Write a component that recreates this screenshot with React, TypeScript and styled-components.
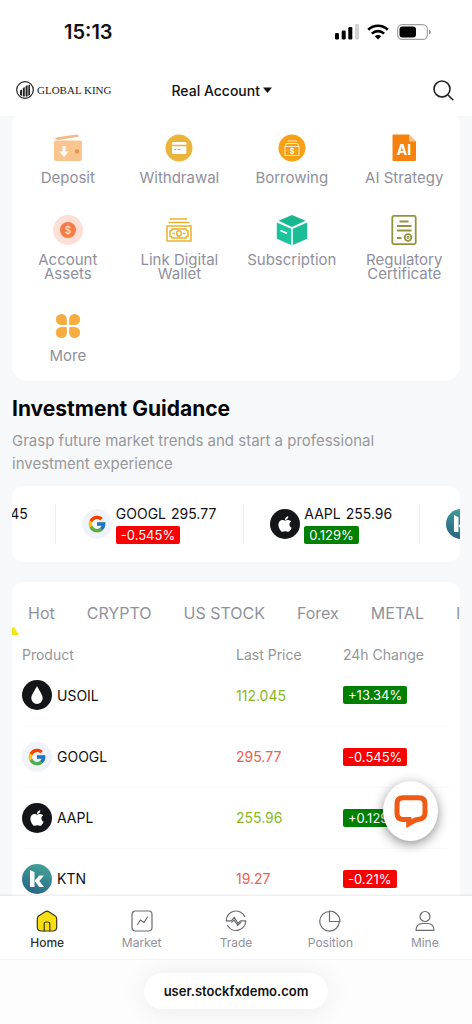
import React from "react";
import styled, { createGlobalStyle } from "styled-components";
import { FaApple } from "react-icons/fa";
import { FcGoogle } from "react-icons/fc";

const GlobalStyle = createGlobalStyle`
  * { box-sizing: border-box; }
  body {
    margin: 0;
    background: #ffffff;
    font-family: Inter, "Liberation Sans", sans-serif;
    color: #111111;
  }
  button {
    font: inherit;
    color: inherit;
    background: none;
    border: 0;
    padding: 0;
    cursor: pointer;
  }
  a { color: inherit; text-decoration: none; }
  svg { display: block; flex: none; }
`;

const Screen = styled.div`
  display: flex;
  flex-direction: column;
  height: 100vh;
  position: relative;
  overflow: hidden;
`;

const StatusBar = styled.div`
  flex: none;
  display: flex;
  align-items: center;
  justify-content: space-between;
  height: 64px;
  padding: 0 41px 0 64px;
`;

const Clock = styled.span`
  font-size: 20px;
  font-weight: 600;
`;

const StatusIcons = styled.div`
  display: flex;
  align-items: center;
  gap: 8px;
`;

const TopBar = styled.header`
  flex: none;
  display: flex;
  align-items: center;
  height: 52px;
  padding: 0 18px 0 16px;
`;

const Brand = styled.a`
  display: flex;
  align-items: center;
  gap: 3px;
  font-family: "Liberation Serif", serif;
  font-size: 11px;
  color: #222222;
  white-space: nowrap;
`;

const AccountButton = styled.button`
  display: flex;
  align-items: center;
  gap: 3px;
  margin-left: 60px;
  font-size: 14px;
  font-weight: 500;
  white-space: nowrap;
`;

const SearchButton = styled.button`
  margin-left: auto;
`;

const Content = styled.main`
  flex: 1;
  min-height: 0;
  overflow: hidden;
  background: #f7f8fa;
  padding: 0 12px;
`;

const Card = styled.section`
  background: #ffffff;
  border-radius: 12px;
  overflow: hidden;
`;

const ActionsCard = styled(Card)`
  display: grid;
  grid-template-columns: repeat(4, 1fr);
  row-gap: 30px;
  padding: 17px 0 18px;
  border-radius: 6px 6px 16px 16px;
`;

const Action = styled.a`
  display: flex;
  flex-direction: column;
  align-items: center;
  gap: 8px;
  padding: 0 12px;
  font-size: 15px;
  line-height: 14px;
  text-align: center;
  color: #8f909c;
`;

const Title = styled.h1`
  margin: 16px 0 8px;
  font-size: 21px;
  line-height: 24px;
  font-weight: 700;
  color: #050505;
`;

const Lead = styled.p`
  margin: 0 0 11px;
  padding-right: 40px;
  font-size: 15px;
  line-height: 23px;
  color: #97989b;
`;

const TickerCard = styled(Card)`
  display: flex;
  align-items: center;
  height: 76px;
  margin-bottom: 20px;
`;

const TickerTrack = styled.div`
  display: flex;
  margin-left: -141px;
`;

const TickerItem = styled.div`
  flex: none;
  display: flex;
  align-items: center;
  gap: 4px;
  height: 40px;
  padding: 0 27px 0 26px;
  border-right: 1px solid #eeeeee;
`;

const Quote = styled.div`
  display: flex;
  flex-direction: column;
  align-items: flex-start;
  gap: 3px;
`;

const QuoteLine = styled.div`
  display: flex;
  gap: 5px;
  font-size: 14px;
  line-height: 18px;
`;

const Badge = styled.span<{ $up: boolean }>`
  display: inline-block;
  padding: 0 5px;
  border-radius: 2px;
  background: ${(p) => (p.$up ? "#008000" : "#fa0000")};
  color: #ffffff;
  font-size: 13px;
  line-height: 18px;
`;

const Tabs = styled.div`
  position: relative;
  display: flex;
  align-items: center;
  gap: 32px;
  height: 62px;
  padding-left: 16px;
`;

const Tab = styled.button`
  flex: none;
  font-size: 16px;
  color: #8f929c;
`;

const TabMarker = styled.svg`
  position: absolute;
  left: 0;
  bottom: 9px;
`;

const TableWrap = styled.div`
  padding: 0 10px;
`;

const Table = styled.table`
  width: 100%;
  table-layout: fixed;
  border-collapse: collapse;
  font-size: 14px;

  th {
    width: 25%;
    height: 21px;
    padding: 0;
    text-align: left;
    font-weight: 400;
    color: #939599;
  }
  th:first-child { width: 50%; }
  td {
    height: 61px;
    padding: 0;
    border-bottom: 1px solid #fafafa;
  }
`;

const Product = styled.div`
  display: flex;
  align-items: center;
  gap: 5px;
`;

const Price = styled.span<{ $up: boolean }>`
  color: ${(p) => (p.$up ? "#86b81f" : "#ea5f50")};
`;

const Coin = styled.span<{ $bg: string }>`
  flex: none;
  display: flex;
  align-items: center;
  justify-content: center;
  width: 30px;
  height: 30px;
  border-radius: 50%;
  background: ${(p) => p.$bg};
  color: #ffffff;
`;

const ChatButton = styled.button`
  position: absolute;
  right: 34px;
  bottom: 183px;
  display: flex;
  align-items: center;
  justify-content: center;
  width: 55px;
  height: 60px;
  border-radius: 50%;
  background: #ffffff;
  box-shadow: 0 3px 12px rgba(0, 0, 0, 0.45);
`;

const NavBar = styled.nav`
  flex: none;
  display: grid;
  grid-template-columns: repeat(5, 1fr);
  height: 64px;
  background: #ffffff;
  border-bottom: 1px solid #f3f3f4;
  box-shadow: 0 -1px 2px rgba(0, 0, 0, 0.09);
`;

const NavItem = styled.a<{ $active?: boolean }>`
  display: flex;
  flex-direction: column;
  align-items: center;
  gap: 3px;
  padding-top: 14px;
  font-size: 12px;
  line-height: 16px;
  font-weight: ${(p) => (p.$active ? 500 : 400)};
  color: ${(p) => (p.$active ? "#333333" : "#8f929e")};
`;

const AddressBar = styled.footer`
  flex: none;
  display: flex;
  align-items: center;
  justify-content: center;
  height: 64px;
  padding-bottom: 2px;
  background: #fdfdfd;
`;

const Address = styled.button`
  height: 36px;
  padding: 0 20px;
  border-radius: 18px;
  background: #ffffff;
  box-shadow: 0 2px 28px rgba(0, 0, 0, 0.08);
  font-size: 13px;
  font-weight: 600;
`;

const icons: Record<string, React.ReactNode> = {
  deposit: (
    <svg width="30" height="30" viewBox="0 0 30 30">
      <path d="M1.500 6 4 4.200 24 1.500q1.200 0 1.400 1.200l.2 1L5 7z" fill="#f3b983" />
      <rect x="1" y="7.500" width="28" height="20.500" rx="2" fill="#fac48f" />
      <path d="M9.500 13h3v5.500h3.200L11 24l-4.700-5.500h3.200z" fill="#fff" />
      <circle cx="24" cy="18.500" r="2.200" fill="#e8944a" />
    </svg>
  ),
  withdrawal: (
    <svg width="30" height="30" viewBox="0 0 30 30">
      <circle cx="15" cy="15" r="13.500" fill="#edb43a" />
      <path d="M8 10.200q0-1.200 1.200-1.200h12q1.200 0 1.200 1.200v1.600H8z" fill="#fff" />
      <path d="M8 13.200h14.400v6.600q0 1.200-1.200 1.200h-12q-1.200 0-1.200-1.200z" fill="#fff" />
      <path d="M10 16.500h2M13.500 16.500h3" stroke="#edb43a" />
    </svg>
  ),
  borrowing: (
    <svg width="30" height="30" viewBox="0 0 30 30" fill="none" stroke="#ffe9c2">
      <circle cx="15" cy="15" r="13.500" fill="#f8a116" stroke="none" />
      <path d="M10.500 8h9.500M9.500 10.500h11l1.500 3M9.500 10.500 8 13.500" />
      <rect x="8" y="13.500" width="14" height="9" />
      <text x="15" y="20.500" fontSize="7" fontWeight="600" textAnchor="middle" fill="#fff" stroke="none">$</text>
    </svg>
  ),
  strategy: (
    <svg width="30" height="30" viewBox="0 0 30 30">
      <path d="M4.500 1.500H20l7 7v18.500q0 1-1 1H4.500q-1 0-1-1v-24.500q0-1 1-1z" fill="#f5810f" />
      <path d="M20 1.500l7 7h-5.500q-1.500 0-1.500-1.500z" fill="#fbc18a" />
      <text x="15" y="22" fontSize="14" fontWeight="700" textAnchor="middle" fill="#fff">AI</text>
    </svg>
  ),
  assets: (
    <svg width="30" height="30" viewBox="0 0 30 30">
      <circle cx="15" cy="15" r="15" fill="#fddfd6" />
      <circle cx="15" cy="15" r="8" fill="#f57b48" />
      <text x="15" y="18.500" fontSize="10" fontWeight="500" textAnchor="middle" fill="#ffe4d8">$</text>
    </svg>
  ),
  link: (
    <svg width="30" height="30" viewBox="0 0 30 30" fill="none" stroke="#e8b32c" strokeWidth="1.500">
      <path d="M6 4h17M4.500 7.500h21" />
      <rect x="3" y="11" width="24" height="15" />
      <path d="M8 14h14q0 2 2 2v5q-2 0-2 2H8q0-2-2-2v-5q2 0 2-2z" />
      <ellipse cx="15" cy="18.500" rx="2.200" ry="2.800" />
      <path d="M8.500 18.500h2.500M19 18.500h2.500" />
    </svg>
  ),
  subscription: (
    <svg width="32" height="30" viewBox="0 0 32 30">
      <path d="M16 0 29.500 5.800 16 12 2.500 5.800z" fill="#17b890" />
      <path d="M.8 7.500 15.200 13.700V30L.8 23.800z" fill="#1bc49d" />
      <path d="M31.200 7.500 16.800 13.700V30L31.200 23.800z" fill="#1bbd97" />
      <path d="M4.500 15.500l6.500 2.800" stroke="#fff" strokeWidth="1.800" />
    </svg>
  ),
  certificate: (
    <svg width="30" height="30" viewBox="0 0 30 30" fill="none" stroke="#94943f" strokeWidth="1.800">
      <rect x="3.300" y="0.900" width="23.400" height="28.200" rx="1.500" />
      <path d="M10.500 6.500h9M8 11h14.500M8 15.500h14.500M8 23h4.500" />
      <circle cx="19" cy="22.500" r="3.300" />
      <circle cx="19" cy="22.500" r=".5" />
    </svg>
  ),
  more: (
    <svg width="30" height="30" viewBox="0 0 30 30" fill="#f6ac40">
      <path d="M8.400 3A5.500 5.500 0 0 0 8.400 14H12.700q1.200 0 1.200-1.200V8.500A5.500 5.500 0 0 0 8.400 3z" />
      <path d="M21.600 3A5.500 5.500 0 0 1 21.600 14H17.300q-1.200 0-1.200-1.200V8.500A5.500 5.500 0 0 1 21.600 3z" />
      <path d="M8.400 27A5.500 5.500 0 0 1 8.400 16H12.700q1.200 0 1.200 1.200V21.500A5.500 5.500 0 0 1 8.400 27z" />
      <path d="M21.600 27A5.500 5.500 0 0 0 21.600 16H17.300q-1.200 0-1.200 1.200V21.500A5.500 5.500 0 0 0 21.600 27z" />
    </svg>
  ),
};

const actions = [
  { icon: "deposit", label: "Deposit" },
  { icon: "withdrawal", label: "Withdrawal" },
  { icon: "borrowing", label: "Borrowing" },
  { icon: "strategy", label: "AI Strategy" },
  { icon: "assets", label: "Account Assets" },
  { icon: "link", label: "Link Digital Wallet" },
  { icon: "subscription", label: "Subscription" },
  { icon: "certificate", label: "Regulatory Certificate" },
  { icon: "more", label: "More" },
];

const quotes = [
  { symbol: "USOIL", price: "112.045", change: "13.34%", up: true },
  { symbol: "GOOGL", price: "295.77", change: "-0.545%", up: false },
  { symbol: "AAPL", price: "255.96", change: "0.129%", up: true },
  { symbol: "KTN", price: "19.27", change: "-0.21%", up: false },
];

const tabs = ["Hot", "CRYPTO", "US STOCK", "Forex", "METAL", "Index"];

function SymbolIcon({ symbol }: { symbol: string }) {
  if (symbol === "GOOGL") {
    return <Coin $bg="#f0f3fa"><FcGoogle size={20} /></Coin>;
  }
  if (symbol === "AAPL") {
    return <Coin $bg="#131519"><FaApple size={18} /></Coin>;
  }
  if (symbol === "USOIL") {
    return (
      <Coin $bg="#131519">
        <svg width="12" height="18" viewBox="0 0 12 18">
          <path d="M6 0C7.500 3.500 11.700 8.500 11.700 12.200A5.700 5.700 0 0 1 .3 12.200C.3 8.500 4.500 3.500 6 0z" fill="#fff" />
        </svg>
      </Coin>
    );
  }
  return (
    <Coin $bg="linear-gradient(200deg, #48a999, #235f87)">
      <svg width="16" height="18" viewBox="0 0 16 18" fill="#fff">
        <path d="M1 0 5.500 2.200V17H1z" />
        <path d="M5.500 10.800 10.300 5.500H15L10.300 11l4.700 6H10.300z" />
      </svg>
    </Coin>
  );
}

const line = { fill: "none", stroke: "#6b6c70", strokeWidth: 1.2, strokeLinejoin: "round", strokeLinecap: "round" } as const;

const navItems = [
  {
    label: "Home",
    icon: (
      <svg width="22" height="22" viewBox="0 0 22 22" {...line} stroke="#3c3a1c">
        <path d="M3 5.700 9.500 1.600q1.500-.8 3 0L19 5.700q1.700 1.100 1.700 3V17q0 4-4 4H5.300q-4 0-4-4V8.700q0-1.900 1.700-3z" fill="#fadf12" />
        <path d="M8.200 21v-7q0-2 2-2h1.600q2 0 2 2v7" />
      </svg>
    ),
  },
  {
    label: "Market",
    icon: (
      <svg width="22" height="22" viewBox="0 0 22 22" {...line}>
        <rect x="1" y="1" width="20" height="20" rx="3.500" />
        <path d="M6.500 14.500 9.500 10l3.500 2.500 3.500-5.500" />
      </svg>
    ),
  },
  {
    label: "Trade",
    icon: (
      <svg width="22" height="22" viewBox="0 0 22 22" {...line}>
        <path d="M19.800 6.500A9.800 9.800 0 0 0 1.200 10.800H6.300L9.300 7.300 13 13.500 15.500 10.800H20.800A9.800 9.800 0 0 1 2.500 15.500" />
        <path d="M6.800 12.200 9 9.800 12.800 15.300 15.800 12.300" />
      </svg>
    ),
  },
  {
    label: "Position",
    icon: (
      <svg width="22" height="22" viewBox="0 0 22 22" {...line}>
        <path d="M10.500 1.500a9.800 9.800 0 1 0 9.800 10.300" />
        <path d="M10.500 1v10.500H21A10.500 10.500 0 0 0 10.500 1z" />
      </svg>
    ),
  },
  {
    label: "Mine",
    icon: (
      <svg width="22" height="22" viewBox="0 0 22 22" {...line}>
        <circle cx="11" cy="6.500" r="5" />
        <path d="M2 20.300q0-6.500 6.500-6.800h5q6.500.3 6.500 6.800z" />
      </svg>
    ),
  },
];

export default function App() {
  return (
    <>
      <GlobalStyle />
      <Screen>
        <StatusBar>
          <Clock>15:13</Clock>
          <StatusIcons>
            <svg width="24" height="16" viewBox="0 0 24 16">
              <rect x="0" y="9" width="4" height="6.500" rx="1.200" />
              <rect x="6.700" y="6.500" width="4" height="9" rx="1.200" />
              <rect x="13.300" y="3" width="4" height="12.500" rx="1.200" />
              <rect x="20" y="0" width="4" height="15.500" rx="1.200" fill="#d2d2d2" />
            </svg>
            <svg width="22" height="16" viewBox="0 0 22 16" fill="none" stroke="#000" strokeWidth="2.600">
              <path d="M1.200 5.800a14 14 0 0 1 19.600 0" />
              <path d="M4.900 9.600a8.700 8.700 0 0 1 12.200 0" />
              <path d="M11 15.500 7.800 12.300a4.500 4.500 0 0 1 6.400 0z" fill="#000" stroke="none" />
            </svg>
            <svg width="34" height="16" viewBox="0 0 34 16">
              <rect x=".6" y=".6" width="29.800" height="14.800" rx="4.600" fill="none" stroke="#a2a2a2" strokeWidth="1.200" />
              <rect x="2.500" y="2.500" width="16.500" height="11" rx="3" />
              <path d="M32 5.500q1.800.5 1.800 2.500T32 10.500z" fill="#8c8c8c" />
            </svg>
          </StatusIcons>
        </StatusBar>
        <TopBar>
          <Brand href="#">
            <svg width="18" height="18" viewBox="0 0 18 18">
              <circle cx="9" cy="9" r="8.300" fill="none" stroke="#222" strokeWidth="1.200" />
              <path d="M4 9.500 6 8.500v6.500L4 14zM6.800 7 8.800 6v9.500h-2zM9.600 5 11.600 4v11.500h-2zM12.300 4.500l1.700-1V14l-1.700 1z" fill="#222" />
            </svg>
            GLOBAL KING
          </Brand>
          <AccountButton>
            Real Account
            <svg width="9" height="6" viewBox="0 0 9 6">
              <path d="M0 .5h9L4.500 6z" fill="#111" />
            </svg>
          </AccountButton>
          <SearchButton aria-label="Search">
            <svg width="21" height="21" viewBox="0 0 21 21" fill="none" stroke="#222" strokeWidth="1.600">
              <circle cx="9" cy="9" r="8" />
              <path d="M15 15l5.300 5.300" />
            </svg>
          </SearchButton>
        </TopBar>
        <Content>
          <ActionsCard>
            {actions.map((a) => (
              <Action key={a.label} href="#">
                {icons[a.icon]}
                {a.label}
              </Action>
            ))}
          </ActionsCard>
          <Title>Investment Guidance</Title>
          <Lead>Grasp future market trends and start a professional investment experience</Lead>
          <TickerCard>
            <TickerTrack>
              {quotes.map((q) => (
                <TickerItem key={q.symbol}>
                  <SymbolIcon symbol={q.symbol} />
                  <Quote>
                    <QuoteLine>
                      <span>{q.symbol}</span>
                      <span>{q.price}</span>
                    </QuoteLine>
                    <Badge $up={q.up}>{q.change}</Badge>
                  </Quote>
                </TickerItem>
              ))}
            </TickerTrack>
          </TickerCard>
          <Card>
            <Tabs>
              {tabs.map((t) => (
                <Tab key={t}>{t}</Tab>
              ))}
              <TabMarker width="7" height="8" viewBox="0 0 7 8">
                <path d="M0 1 2 0l5 8H0z" fill="#f5e616" />
              </TabMarker>
            </Tabs>
            <TableWrap>
              <Table>
                <thead>
                  <tr>
                    <th>Product</th>
                    <th>Last Price</th>
                    <th>24h Change</th>
                  </tr>
                </thead>
                <tbody>
                  {quotes.map((q) => (
                    <tr key={q.symbol}>
                      <td>
                        <Product>
                          <SymbolIcon symbol={q.symbol} />
                          {q.symbol}
                        </Product>
                      </td>
                      <td><Price $up={q.up}>{q.price}</Price></td>
                      <td><Badge $up={q.up}>{q.up ? "+" : ""}{q.change}</Badge></td>
                    </tr>
                  ))}
                </tbody>
              </Table>
            </TableWrap>
          </Card>
        </Content>
        <NavBar>
          {navItems.map((n, i) => (
            <NavItem key={n.label} href="#" $active={i === 0}>
              {n.icon}
              {n.label}
            </NavItem>
          ))}
        </NavBar>
        <AddressBar>
          <Address>user.stockfxdemo.com</Address>
        </AddressBar>
        <ChatButton aria-label="Open chat">
          <svg width="34" height="33" viewBox="0 0 34 33">
            <path
              d="M9 2.700H25q6 0 6 6V18q0 5.500-6 6.300L21.500 25 15 28.500V24.500H9q-6-.5-6-6V8.700q0-6 6-6z"
              fill="none" stroke="#f05a14" strokeWidth="5"
            />
            <path d="M12.500 24v9l9-6.500z" fill="#f05a14" />
          </svg>
        </ChatButton>
      </Screen>
    </>
  );
}
